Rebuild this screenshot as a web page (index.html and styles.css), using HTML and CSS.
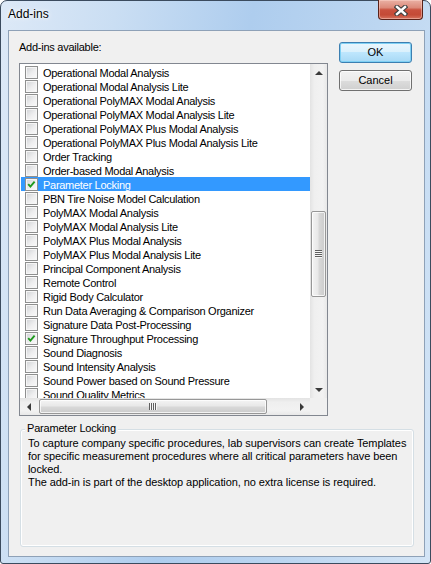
FILE: index.html
```html
<!DOCTYPE html>
<html>
<head>
<meta charset="utf-8">
<link rel="stylesheet" href="styles.css">
</head>
<body>
<div class="window">
  <div class="titlebar">
    <span class="title">Add-ins</span>
    <div class="close">
      <svg width="14" height="11" viewBox="0 0 14 11"><path d="M3 2 L11 9 M11 2 L3 9" stroke="#3f3f3f" stroke-width="4.6" stroke-linecap="square" fill="none"/><path d="M3 2 L11 9 M11 2 L3 9" stroke="#ffffff" stroke-width="2.4" stroke-linecap="square" fill="none"/></svg>
    </div>
  </div>
  <div class="client">
    <div class="top">
      <div class="left">
        <div class="label">Add-ins available:</div>
        <div class="listbox">
          <div class="lb-main">
            <div class="rows">
              <div class="row"><span class="cb"></span><span class="txt">Operational Modal Analysis</span></div>
              <div class="row"><span class="cb"></span><span class="txt">Operational Modal Analysis Lite</span></div>
              <div class="row"><span class="cb"></span><span class="txt">Operational PolyMAX Modal Analysis</span></div>
              <div class="row"><span class="cb"></span><span class="txt">Operational PolyMAX Modal Analysis Lite</span></div>
              <div class="row"><span class="cb"></span><span class="txt">Operational PolyMAX Plus Modal Analysis</span></div>
              <div class="row"><span class="cb"></span><span class="txt">Operational PolyMAX Plus Modal Analysis Lite</span></div>
              <div class="row"><span class="cb"></span><span class="txt">Order Tracking</span></div>
              <div class="row"><span class="cb"></span><span class="txt">Order-based Modal Analysis</span></div>
              <div class="row selected"><span class="cb"><svg width="11" height="11" viewBox="0 0 11 11"><path d="M2.2 5.2 L4.4 7.6 L8.6 2.6" stroke="#1e9a1e" stroke-width="1.9" fill="none"/></svg></span><span class="txt">Parameter Locking</span></div>
              <div class="row"><span class="cb"></span><span class="txt">PBN Tire Noise Model Calculation</span></div>
              <div class="row"><span class="cb"></span><span class="txt">PolyMAX Modal Analysis</span></div>
              <div class="row"><span class="cb"></span><span class="txt">PolyMAX Modal Analysis Lite</span></div>
              <div class="row"><span class="cb"></span><span class="txt">PolyMAX Plus Modal Analysis</span></div>
              <div class="row"><span class="cb"></span><span class="txt">PolyMAX Plus Modal Analysis Lite</span></div>
              <div class="row"><span class="cb"></span><span class="txt">Principal Component Analysis</span></div>
              <div class="row"><span class="cb"></span><span class="txt">Remote Control</span></div>
              <div class="row"><span class="cb"></span><span class="txt">Rigid Body Calculator</span></div>
              <div class="row"><span class="cb"></span><span class="txt">Run Data Averaging &amp; Comparison Organizer</span></div>
              <div class="row"><span class="cb"></span><span class="txt">Signature Data Post-Processing</span></div>
              <div class="row"><span class="cb"><svg width="11" height="11" viewBox="0 0 11 11"><path d="M2.2 5.2 L4.4 7.6 L8.6 2.6" stroke="#1e9a1e" stroke-width="1.9" fill="none"/></svg></span><span class="txt">Signature Throughput Processing</span></div>
              <div class="row"><span class="cb"></span><span class="txt">Sound Diagnosis</span></div>
              <div class="row"><span class="cb"></span><span class="txt">Sound Intensity Analysis</span></div>
              <div class="row"><span class="cb"></span><span class="txt">Sound Power based on Sound Pressure</span></div>
              <div class="row"><span class="cb"></span><span class="txt">Sound Quality Metrics</span></div>
            </div>
            <div class="vscroll">
              <div class="sb-btn"><span class="arr-up"></span></div>
              <div class="vtrack"><div class="vthumb"><span class="vgrip"></span></div></div>
              <div class="sb-btn"><span class="arr-down"></span></div>
            </div>
          </div>
          <div class="lb-bottom">
            <div class="hscroll">
              <div class="sb-hbtn"><span class="arr-left"></span></div>
              <div class="htrack"><div class="hthumb"><span class="hgrip"></span></div></div>
              <div class="sb-hbtn"><span class="arr-right"></span></div>
            </div>
            <div class="corner"></div>
          </div>
        </div>
      </div>
      <div class="buttons">
        <div class="btn default">OK</div>
        <div class="btn">Cancel</div>
      </div>
    </div>
    <div class="group">
      <span class="legend">Parameter Locking</span>
      <p class="desc">To capture company specific procedures, lab supervisors can create Templates<br>for specific measurement procedures where all critical parameters have been<br>locked.<br>The add-in is part of the desktop application, no extra license is required.</p>
    </div>
  </div>
</div>
</body>
</html>
```
FILE: styles.css
```css
html, body {
  margin: 0;
  padding: 0;
  background: #ffffff;
}
body {
  width: 431px;
  height: 564px;
  overflow: hidden;
  font-family: "Liberation Sans", Arial, sans-serif;
  font-size: 11px;
  color: #000;
}
.window {
  width: 431px;
  height: 564px;
  box-sizing: border-box;
  border: 1px solid #3b4b5e;
  border-radius: 7px 7px 3px 3px;
  background: linear-gradient(100deg, #dde9f7 0%, #cadef3 22%, #aecdee 48%, #bcd6f1 72%, #d4e5f6 100%);
  display: flex;
  flex-direction: column;
  padding: 0 5px 6px 7px;
}
.titlebar {
  height: 29px;
  display: flex;
  align-items: flex-start;
  justify-content: space-between;
  flex: none;
}
.title {
  font-size: 12px;
  line-height: 15px;
  margin-top: 6px;
  color: #000;
  text-shadow: 0 0 6px #ffffff, 0 0 3px #ffffff;
}
.close {
  width: 45px;
  height: 20px;
  box-sizing: border-box;
  margin-top: -1px;
  margin-right: 2px;
  border: 1px solid #5a2219;
  border-top: none;
  border-radius: 0 0 4px 4px;
  background: linear-gradient(#eab1a4 0%, #dc8a7a 40%, #c9503d 52%, #c44a36 78%, #d6735e 100%);
  box-shadow: inset 0 0 0 1px rgba(255, 220, 210, 0.45);
  display: flex;
  align-items: center;
  justify-content: center;
}
.close svg { display: block; margin-top: 1px; }
.client {
  flex: 1;
  border: 1px solid #8ea1b7;
  background: #f0f0f0;
  display: flex;
  flex-direction: column;
}
.top {
  display: flex;
  align-items: flex-start;
}
.left {
  margin-left: 10px;
  margin-top: 10px;
  width: 309px;
}
.label {
  line-height: 13px;
  height: 13px;
  letter-spacing: -0.25px;
}
.listbox {
  margin-top: 9px;
  width: 309px;
  height: 353px;
  box-sizing: border-box;
  border: 1px solid #828790;
  background: #ffffff;
  display: flex;
  flex-direction: column;
}
.lb-main {
  height: 334px;
  display: flex;
}
.rows {
  width: 290px;
  height: 334px;
  box-sizing: border-box;
  padding: 1px 0 0 1px;
  overflow: hidden;
}
.row {
  height: 14px;
  display: flex;
  align-items: flex-start;
  white-space: nowrap;
}
.row.selected {
  background: #3399ff;
  color: #ffffff;
}
.cb {
  width: 13px;
  height: 13px;
  box-sizing: border-box;
  margin: 1px 5px 0 4px;
  border: 1px solid #8e8f8f;
  background: linear-gradient(135deg, #cfd1d4 0%, #eeeeef 55%, #fafafa 100%);
  box-shadow: inset 0 0 0 1px #f6f6f6;
  flex: none;
  display: flex;
  align-items: center;
  justify-content: center;
}
.cb svg { display: block; }
.txt {
  line-height: 13px;
  height: 12px;
  padding-top: 2px;
  letter-spacing: -0.28px;
}
.vscroll {
  width: 17px;
  height: 334px;
  background: linear-gradient(to right, #e3e3e3 0%, #efefef 25%, #f2f2f2 75%, #e8e8e8 100%);
  display: flex;
  flex-direction: column;
}
.sb-btn {
  height: 17px;
  flex: none;
  display: flex;
  align-items: center;
  justify-content: center;
}
.vtrack {
  flex: 1;
  padding-top: 130px;
}
.vthumb {
  margin: 0 1px 0 1px;
  height: 86px;
  box-sizing: border-box;
  border: 1px solid #979797;
  border-radius: 2px;
  background: linear-gradient(to right, #f4f4f4 0%, #e8e8e8 45%, #d8d8d8 55%, #cbcbcb 100%);
  box-shadow: inset 0 0 0 1px rgba(255, 255, 255, 0.75);
  display: flex;
  align-items: center;
  justify-content: center;
}
.vgrip {
  width: 7px;
  height: 8px;
  background: repeating-linear-gradient(to bottom, #5f5f5f 0, #5f5f5f 1px, #f6f6f6 1px, #f6f6f6 2px);
}
.arr-up {
  width: 0;
  height: 0;
  border-left: 4px solid transparent;
  border-right: 4px solid transparent;
  border-bottom: 4px solid #3a3a3a;
}
.arr-down {
  width: 0;
  height: 0;
  border-left: 4px solid transparent;
  border-right: 4px solid transparent;
  border-top: 4px solid #3a3a3a;
}
.lb-bottom {
  height: 17px;
  display: flex;
}
.hscroll {
  width: 290px;
  height: 17px;
  background: linear-gradient(to bottom, #e3e3e3 0%, #efefef 25%, #f2f2f2 75%, #e8e8e8 100%);
  display: flex;
}
.sb-hbtn {
  width: 17px;
  flex: none;
  display: flex;
  align-items: center;
  justify-content: center;
}
.htrack {
  flex: 1;
  padding-left: 2px;
}
.hthumb {
  margin-top: 1px;
  width: 228px;
  height: 15px;
  box-sizing: border-box;
  border: 1px solid #979797;
  border-radius: 2px;
  background: linear-gradient(to bottom, #f4f4f4 0%, #e8e8e8 45%, #d8d8d8 55%, #cbcbcb 100%);
  box-shadow: inset 0 0 0 1px rgba(255, 255, 255, 0.75);
  display: flex;
  align-items: center;
  justify-content: center;
}
.hgrip {
  width: 8px;
  height: 7px;
  background: repeating-linear-gradient(to right, #5f5f5f 0, #5f5f5f 1px, #f6f6f6 1px, #f6f6f6 2px);
}
.arr-left {
  width: 0;
  height: 0;
  border-top: 4px solid transparent;
  border-bottom: 4px solid transparent;
  border-right: 4px solid #3a3a3a;
}
.arr-right {
  width: 0;
  height: 0;
  border-top: 4px solid transparent;
  border-bottom: 4px solid transparent;
  border-left: 4px solid #3a3a3a;
}
.corner {
  width: 17px;
  height: 17px;
  background: #f0f0f0;
}
.buttons {
  margin-left: 11px;
  margin-top: 11px;
  display: flex;
  flex-direction: column;
  gap: 7px;
}
.btn {
  width: 73px;
  height: 21px;
  box-sizing: border-box;
  border: 1px solid #707070;
  border-radius: 3px;
  background: linear-gradient(#f2f2f2 0%, #ebebeb 50%, #dddddd 50%, #cfcfcf 100%);
  box-shadow: inset 0 0 0 1px rgba(255, 255, 255, 0.75);
  text-align: center;
  line-height: 19px;
}
.btn.default {
  border-color: #3c7fb1;
  background: linear-gradient(#eaf6fd 0%, #d9f0fc 50%, #bee6fd 50%, #a7d9f5 100%);
  box-shadow: inset 0 0 0 1px #7fd0f4;
}
.group {
  position: relative;
  margin: 13px 0 0 11px;
  width: 394px;
  height: 118px;
  box-sizing: border-box;
  border: 1px solid #d5dfe5;
  border-radius: 3px;
  box-shadow: inset 0 0 0 1px #ffffff;
}
.legend {
  position: absolute;
  left: 4px;
  top: -8px;
  padding: 0 2px;
  background: #f0f0f0;
  line-height: 13px;
  letter-spacing: -0.2px;
}
.desc {
  margin: 0;
  padding: 7px 0 0 7px;
  line-height: 13px;
  white-space: nowrap;
  letter-spacing: -0.08px;
}
```
